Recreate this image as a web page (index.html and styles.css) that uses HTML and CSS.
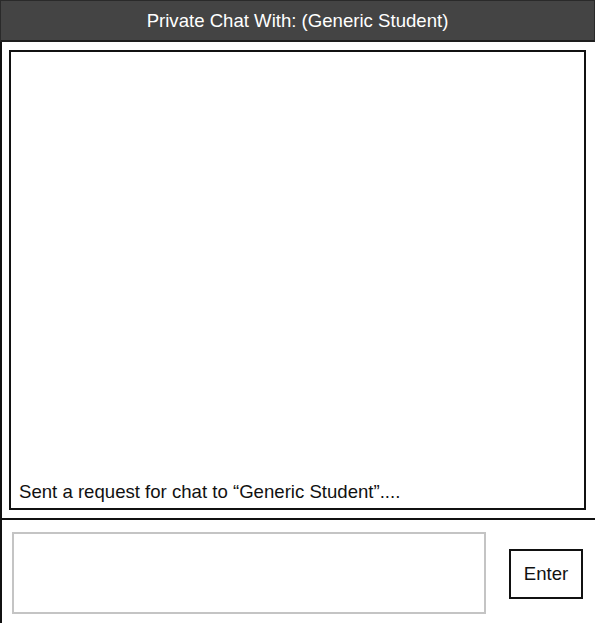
FILE: index.html
```html
<!DOCTYPE html>
<html>
<head>
<meta charset="utf-8">
<link rel="stylesheet" href="styles.css">
</head>
<body>
<div class="window">
  <div class="header">Private Chat With: (Generic Student)</div>
  <div class="main">
    <div class="chat-wrap">
      <div class="chat-box">
        <div class="message">Sent a request for chat to “Generic Student”....</div>
      </div>
    </div>
    <div class="input-row">
      <textarea class="input"></textarea>
      <button class="enter">Enter</button>
    </div>
  </div>
</div>
</body>
</html>
```
FILE: styles.css
```css
html, body {
  margin: 0;
  padding: 0;
  background: #fff;
}
body {
  font-family: "Liberation Sans", Arial, sans-serif;
  width: 595px;
  height: 623px;
  overflow: hidden;
}
.window {
  width: 595px;
  height: 623px;
  display: flex;
  flex-direction: column;
}
.header {
  border-top: 1px solid #2a2a2a;
  border-left: 1px solid #2a2a2a;
  border-right: 1px solid #2a2a2a;
  border-bottom: 2px solid #1e1e1e;
  background: #444444;
  box-sizing: border-box;
  height: 42px;
  display: flex;
  align-items: center;
  justify-content: center;
  color: #fff;
  font-size: 18.6px;
}
.main {
  flex: 1;
  border-left: 2px solid #111;
  display: flex;
  flex-direction: column;
}
.chat-wrap {
  padding: 8px 9px 8px 7px;
}
.chat-box {
  height: 460px;
  box-sizing: border-box;
  border: 2px solid #111;
  display: flex;
  align-items: flex-end;
  padding: 0 8px 6px 8px;
}
.message {
  font-size: 18.6px;
  color: #111;
  line-height: 21px;
}
.input-row {
  flex: 1;
  border-top: 2px solid #111;
  display: flex;
  align-items: flex-start;
  padding: 12px 0 0 10px;
}
.input {
  width: 474px;
  height: 82px;
  box-sizing: border-box;
  border: 2px solid #c4c4c4;
  resize: none;
  margin: 0;
  padding: 0;
  outline: none;
}
.enter {
  margin: 17px 0 0 23px;
  width: 74px;
  height: 50px;
  box-sizing: border-box;
  border: 2px solid #111;
  background: #fff;
  font-family: "Liberation Sans", Arial, sans-serif;
  font-size: 18.6px;
  color: #111;
  padding: 0;
  border-radius: 0;
}
```
